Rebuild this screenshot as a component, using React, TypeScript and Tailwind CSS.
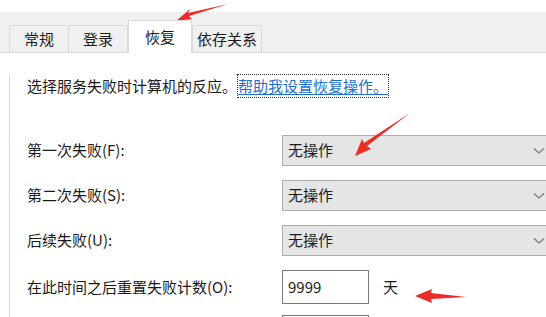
import React from 'react';

const font = { fontFamily: '"Noto Sans CJK SC", "Noto Sans", sans-serif' };

function Chevron() {
  return (
    <svg width="12" height="8" viewBox="0 0 12 8" className="shrink-0">
      <path d="M1 1.5 L6 6 L11 1.5" fill="none" stroke="#7a7a7a" strokeWidth="1.3" />
    </svg>
  );
}

function Select({ value }: { value: string }) {
  return (
    <div className="flex h-[31px] w-[270px] shrink-0 items-center justify-between border border-[#adadad] bg-[#e5e5e5] pl-[5px] pr-[6px] text-[15px] text-[#1a1a1a]">
      <span>{value}</span>
      <Chevron />
    </div>
  );
}

function Tab({ label, active }: { label: string; active?: boolean }) {
  if (active) {
    return (
      <div className="relative z-10 -mb-px flex h-[33px] w-[64px] shrink-0 items-start justify-center whitespace-nowrap border border-b-0 border-[#d9d9d9] bg-white pt-[5px] text-[15px] text-[#1a1a1a]">
        {label}
      </div>
    );
  }
  return (
    <div className="flex h-[27px] items-start justify-center whitespace-nowrap border border-b-0 border-[#d9d9d9] bg-[#f0f0f0] pt-[2px] text-[15px] text-[#1a1a1a]">
      {label}
    </div>
  );
}

export default function App() {
  const rows = [
    { label: '第一次失败(F):', value: '无操作' },
    { label: '第二次失败(S):', value: '无操作' },
    { label: '后续失败(U):', value: '无操作' },
  ];

  return (
    <div className="relative h-[317px] w-[546px] overflow-hidden bg-white" style={font}>
      <div className="h-[12px] bg-white" />
      <div className="flex h-[41px] items-end border-b border-[#d9d9d9] bg-[#f0f0f0] pl-[9px]">
        <div className="w-[60px] shrink-0"><Tab label="常规" /></div>
        <div className="-ml-px w-[60px] shrink-0"><Tab label="登录" /></div>
        <Tab label="恢复" active />
        <div className="w-[70px] shrink-0"><Tab label="依存关系" /></div>
      </div>
      <div className="ml-[9px] h-[264px] border-l border-[#d9d9d9] pl-[17px]">
        <div className="mt-[21px] flex items-center whitespace-nowrap text-[15px] leading-[22px] text-[#1a1a1a]">
          <span>选择服务失败时计算机的反应。</span>
          <span className="border border-dotted border-[#333] text-[#1c6fd1] underline underline-offset-2">帮助我设置恢复操作。</span>
        </div>
        <div className="mt-[37px] flex flex-col gap-[14px]">
          {rows.map((r) => (
            <div key={r.label} className="flex items-center">
              <div className="w-[255px] shrink-0 text-[15px] text-[#1a1a1a]">{r.label}</div>
              <Select value={r.value} />
            </div>
          ))}
          <div className="flex items-center">
            <div className="w-[255px] shrink-0 text-[15px] text-[#1a1a1a]">在此时间之后重置失败计数(O):</div>
            <div className="flex h-[34px] w-[87px] shrink-0 items-center border border-[#7a7a7a] bg-white pl-[5px] text-[15px] text-[#1a1a1a]">9999</div>
            <span className="ml-[14px] text-[15px] text-[#1a1a1a]">天</span>
          </div>
          <div className="-mt-[3px] ml-[255px] h-[20px] w-[87px] border border-[#7a7a7a]" />
        </div>
      </div>
      <svg className="pointer-events-none absolute left-0 top-0" width="546" height="317" viewBox="0 0 546 317">
        <polygon points="176,21 190,9 188,13 228,4 189,16 192,19" fill="#ea2b26" />
        <polygon points="355,156 362,139 364,143 410,113 367,146 371,149" fill="#ea2b26" />
        <polygon points="415,296 432,289 431,293 466,297 431,299 432,303" fill="#ea2b26" />
      </svg>
    </div>
  );
}
